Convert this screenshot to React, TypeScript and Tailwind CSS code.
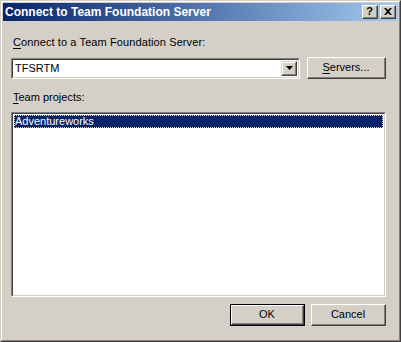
import React from "react";

const font = { fontFamily: '"Liberation Sans", Arial, sans-serif' };

function Btn({ children, def, className = "" }: { children: React.ReactNode; def?: boolean; className?: string }) {
  return (
    <div className={`${def ? "border border-black" : ""} ${className}`}>
      <div className="h-full border-t border-l border-t-white border-l-white border-r border-b border-r-[#404040] border-b-[#404040] bg-[#d4d0c8]">
        <div className="h-full border-r border-b border-r-[#808080] border-b-[#808080] flex items-center justify-center text-[11px] text-black">
          {children}
        </div>
      </div>
    </div>
  );
}

function Sunken({ children, className = "" }: { children: React.ReactNode; className?: string }) {
  return (
    <div className={`border-t border-l border-t-[#808080] border-l-[#808080] border-r border-b border-r-white border-b-white ${className}`}>
      <div className="h-full border-t border-l border-t-[#404040] border-l-[#404040] border-r border-b border-r-[#d4d0c8] border-b-[#d4d0c8] bg-white">
        {children}
      </div>
    </div>
  );
}

function CapBtn({ children }: { children: React.ReactNode }) {
  return (
    <div className="w-4 h-[14px] border-t border-l border-t-white border-l-white border-r border-b border-r-[#404040] border-b-[#404040] bg-[#d4d0c8]">
      <div className="h-full border-r border-b border-r-[#808080] border-b-[#808080] flex items-center justify-center">
        {children}
      </div>
    </div>
  );
}

export default function App() {
  return (
    <div style={font} className="w-[401px] h-[342px] bg-[#d4d0c8] border-t border-l border-t-[#d4d0c8] border-l-[#d4d0c8] border-r border-b border-r-[#404040] border-b-[#404040]">
      <div className="h-full border-t border-l border-t-white border-l-white border-r border-b border-r-[#808080] border-b-[#808080] p-px flex flex-col">
        <div className="h-[18px] bg-gradient-to-r from-[#0a246a] to-[#a6caf0] flex items-center pl-[2px] pr-[2px]">
          <span className="text-white font-bold text-[12px] leading-none">Connect to Team Foundation Server</span>
          <div className="ml-auto flex items-center gap-[2px]">
            <CapBtn>
              <span className="text-[11px] font-bold leading-none text-black">?</span>
            </CapBtn>
            <CapBtn>
              <svg width="8" height="7" viewBox="0 0 8 7">
                <path d="M0 0 L2 0 L4 2 L6 0 L8 0 L5 3.5 L8 7 L6 7 L4 5 L2 7 L0 7 L3 3.5 Z" fill="black" />
              </svg>
            </CapBtn>
          </div>
        </div>
        <div className="flex-1 px-[8px] pt-[15px] flex flex-col text-[11px] text-black">
          <div className="pl-[2px] leading-[13px] h-[13px] tracking-[0.1px]">
            <span className="underline underline-offset-2">C</span>onnect to a Team Foundation Server:
          </div>
          <div className="mt-[8px] flex items-center">
            <Sunken className="w-[289px] h-[21px]">
              <div className="h-full flex items-center">
                <span className="pl-[2px] text-[11px]">TFSRTM</span>
                <div className="ml-auto mr-px w-4 h-[15px] border-t border-l border-t-[#d4d0c8] border-l-[#d4d0c8] border-r border-b border-r-[#404040] border-b-[#404040] bg-[#d4d0c8]">
                  <div className="h-full border-t border-l border-t-white border-l-white border-r border-b border-r-[#808080] border-b-[#808080] flex items-center justify-center">
                    <svg width="7" height="4" viewBox="0 0 7 4"><path d="M0 0 H7 L3.5 4 Z" fill="black" /></svg>
                  </div>
                </div>
              </div>
            </Sunken>
            <Btn className="ml-[7px] w-[79px] h-[22px]">
              <span><span className="underline underline-offset-2">S</span>ervers...</span>
            </Btn>
          </div>
          <div className="mt-[12px] pl-[2px] leading-[13px] h-[13px]">
            <span className="underline underline-offset-2">T</span>eam projects:
          </div>
          <Sunken className="mt-[8px] w-[375px] h-[185px]">
            <div className="pt-px px-px">
              <div className="h-[13px] bg-[#0a246a] text-white leading-[13px] pl-px outline outline-1 outline-dotted outline-[#d4d0c8] -outline-offset-1">
                Adventureworks
              </div>
            </div>
          </Sunken>
          <div className="mt-[7px] flex justify-end gap-[6px] pr-[4px]">
            <Btn def className="w-[75px] h-[22px]">OK</Btn>
            <Btn className="w-[75px] h-[22px]">Cancel</Btn>
          </div>
        </div>
      </div>
    </div>
  );
}
